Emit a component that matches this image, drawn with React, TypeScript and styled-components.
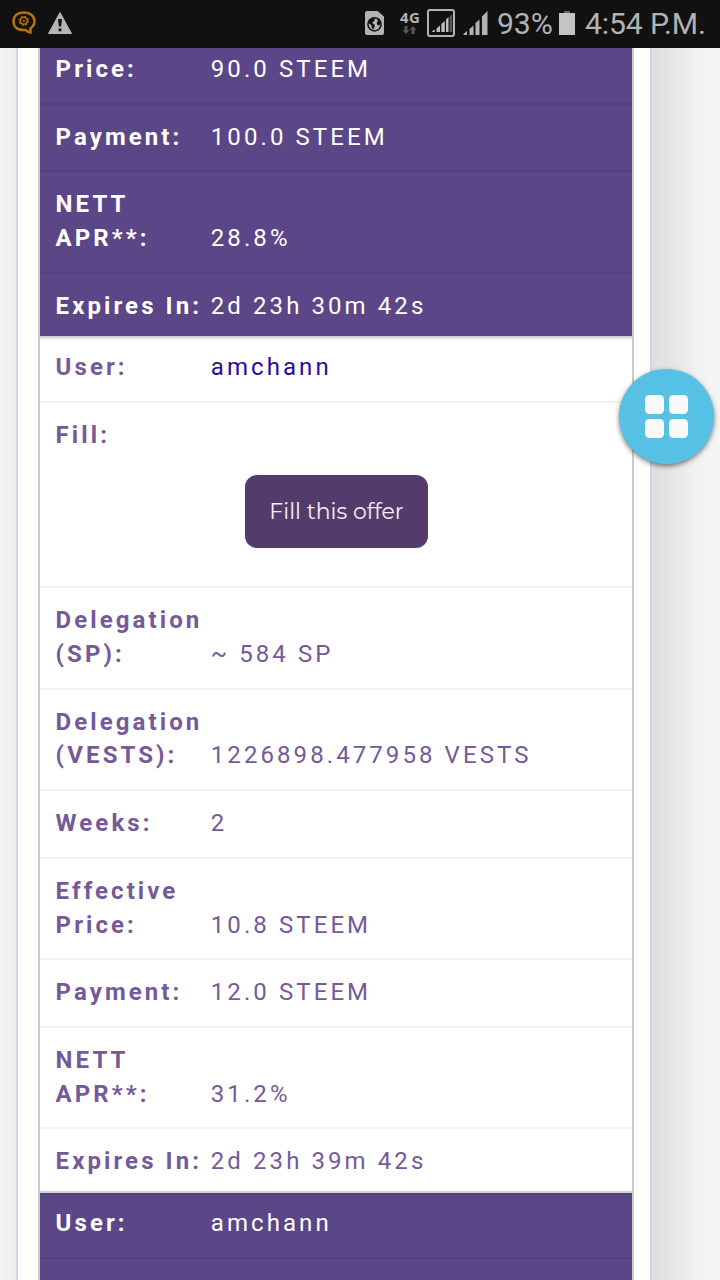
import React from "react";
import styled, { createGlobalStyle, css } from "styled-components";

const GlobalStyle = createGlobalStyle`
  * { box-sizing: border-box; }
  body { margin: 0; font-family: Roboto, sans-serif; background: #f3f3f3; }
`;

const Phone = styled.div`
  position: relative;
  width: 720px;
  height: 1280px;
  display: flex;
  flex-direction: column;
  overflow: hidden;
`;

const StatusBar = styled.header`
  height: 48px;
  flex: none;
  display: flex;
  justify-content: space-between;
  background: #111;
  color: #b3b3b3;
  svg { display: block; flex: none; }
`;

const StatusGroup = styled.div`
  display: flex;
`;

const StatusText = styled.span<{ $width: number }>`
  width: ${(p) => p.$width}px;
  font-size: 30.2px;
  letter-spacing: -0.15px;
  line-height: 47px;
  white-space: nowrap;
`;

const NetworkType = styled.div`
  width: 27px;
  padding-top: 9px;
  font: 700 15px/17px "Open Sans", sans-serif;
  letter-spacing: 0.3px;
`;

const Viewport = styled.main`
  flex: 1;
  min-height: 0;
  display: flex;
  overflow: hidden;
`;

const LeftShade = styled.div`
  width: 16px;
  background: linear-gradient(90deg, #f4f4f4, #ededed);
`;

const RightShade = styled.div`
  flex: 1;
  background: linear-gradient(90deg, #dedede 0, #e3e3e3 20%, #f1f1f1 65%, #f6f6f6 100%);
`;

const Sheet = styled.section`
  width: 636px;
  padding: 0 16px 0 20px;
  border: solid #dacfec;
  border-width: 0 2px;
  background: #fff;
`;

const OfferList = styled.div`
  margin-top: -13px;
  border: solid #cbcbcb;
  border-width: 0 2px;
`;

const Offer = styled.article<{ $dark?: boolean }>`
  --line: ${(p) => (p.$dark ? "#564180" : "#f1f1f1")};
  --label: ${(p) => (p.$dark ? "#fff" : "#745a9b")};
  --value: ${(p) => (p.$dark ? "#fff" : "#745a9b")};
  --link: ${(p) => (p.$dark ? "#fff" : "#2c0a9c")};
  background: ${(p) => (p.$dark ? "#5b4687" : "#fff")};
  & + & { border-top: 2px solid #d2d2d2; }
`;

const Row = styled.div<{ $first?: boolean; $last?: boolean }>`
  display: flex;
  align-items: flex-end;
  padding: 16.1px 16px 15.9px 15.6px;
  border-top: 2px solid var(--line);
  font-size: 24px;
  line-height: 33.7px;
  letter-spacing: 3.08px;
  ${(p) => p.$first && css`padding-top: 11.9px;`}
  ${(p) => p.$last && css`padding-bottom: 12px;`}
`;

const FillRow = styled(Row)`
  height: 185.25px;
  flex-direction: column;
  align-items: stretch;
`;

const Label = styled.span`
  width: 155.2px;
  flex: none;
  color: var(--label);
  font-weight: 700;
  white-space: pre-line;
`;

const Value = styled.span`
  color: var(--value);
  white-space: nowrap;
`;

const UserLink = styled.a`
  color: var(--link);
`;

const ClippedRow = styled(Row)`
  height: 67.75px;
`;

const FillButton = styled.button`
  width: 183px;
  height: 73px;
  margin: 22.2px 0 0 189.4px;
  padding: 0;
  border: 0;
  border-radius: 12px;
  background: #533c6c;
  color: #f3eff6;
  font: 400 22px/73px Montserrat, Lato, sans-serif;
`;

const FloatingButton = styled.div`
  position: absolute;
  left: 619px;
  top: 369px;
  width: 95px;
  height: 95px;
  border-radius: 50%;
  background: #57c0e5;
  box-shadow: 0 2px 5px rgba(0, 0, 0, 0.5);
  display: grid;
  grid-template-columns: 19px 19px;
  grid-auto-rows: 19px;
  gap: 5px;
  place-content: center;
`;

const Tile = styled.i`
  border-radius: 4.5px;
  background: #fafafa;
`;

type Entry = [label: string, value: string];

const OfferRow = ({ entry, last }: { entry: Entry; last?: boolean }) => (
  <Row $last={last}>
    <Label>{entry[0]}</Label>
    <Value>{entry[1]}</Value>
  </Row>
);

const UserRow = () => (
  <Row $first>
    <Label>User:</Label>
    <UserLink>amchann</UserLink>
  </Row>
);

const previousOffer: Entry[] = [
  ["Price:", "90.0 STEEM"],
  ["Payment:", "100.0 STEEM"],
  ["NETT\nAPR**:", "28.8%"],
  ["Expires In:", "2d 23h 30m 42s"],
];

const currentOffer: Entry[] = [
  ["Delegation\n(SP):", "~ 584 SP"],
  ["Delegation\n(VESTS):", "1226898.477958 VESTS"],
  ["Weeks:", "2"],
  ["Effective\nPrice:", "10.8 STEEM"],
  ["Payment:", "12.0 STEEM"],
  ["NETT\nAPR**:", "31.2%"],
  ["Expires In:", "2d 23h 39m 42s"],
];

const NotificationIcons = () => (
  <svg width="80" height="48" viewBox="0 0 80 48">
    <g fill="none" stroke="#b87409">
      <path d="M30.5 32.5v-4.2c2.5-1.7 4-4 4-7 0-5.2-4-8.8-10.2-8.8h-1c-6 0-9.8 3.6-9.8 8.8 0 5.4 3.8 8.8 10.4 8.8h1.6c1.3 1.1 2.8 1.9 5 2.4z" strokeWidth="2.5" />
      <circle cx="23.8" cy="20.8" r="3.5" strokeWidth="1.5" />
      <circle cx="23.8" cy="20.8" r="4.6" strokeWidth="1.2" strokeDasharray="1.8 1.81" />
      <circle cx="23.8" cy="20.8" r=".8" strokeWidth="1" />
    </g>
    <path d="M60 12.5 71.5 33.5h-23z" fill="#b5b5b5" stroke="#b5b5b5" strokeWidth="1" strokeLinejoin="round" />
    <path d="M58 19h4l-.9 7.6h-2.2zM58.6 28.5h2.8v2.8h-2.8z" fill="#111" />
  </svg>
);

const SimIcon = () => (
  <svg width="36" height="48" viewBox="0 0 36 48">
    <path d="M3 11h10.500l6.500 5.500V33a2 2 0 0 1-2 2H3a2 2 0 0 1-2-2V13a2 2 0 0 1 2-2z" fill="#b3b3b3" />
    <circle cx="10.500" cy="24.300" r="6.600" fill="#b3b3b3" stroke="#111" strokeWidth="1.500" />
    <path d="M4.500 21.500 8 18.300l2.800.4-.4 2.300-2 1.200.6 1.600 2 1.200-.6 2-1 2.500-1.800-1.500v-2.600l-2.600-1.800zM13 19.200l2.600 1.600 1 3-1.800 2-1.700-1.200-.4-2 1.200-1.200z" fill="#111" />
  </svg>
);

const DataArrows = () => (
  <svg width="20" height="9" viewBox="0 0 20 9">
    <path d="M4.500 0h3v4h2L6 8 2.500 4h2zM11.500 8h3V4h2L13 0 9.500 4h2z" fill="#555" />
  </svg>
);

const Signals = () => (
  <svg width="70" height="48" viewBox="0 0 70 48">
    <rect x="1" y="10" width="26" height="26" rx="2" fill="none" stroke="#b3b3b3" strokeWidth="2" />
    <path d="M5.300 32v-1l2.500-1.500V32zM9.500 32v-3.500l3.500-3V32zM14.300 32v-8l3.500-3V32zM19 32V19.500l2.500-2.500v15z" fill="#bdbdbd" />
    <path d="M22.500 32V16.500l2.800-2.500v18z" fill="#555" />
    <path d="M36.500 35v-1l3.500-3v4zM42.500 35v-6l4-3.500V35zM48.500 35V23l4-3.500V35zM55 35V16.500l5.500-5.500v24z" fill="#b3b3b3" />
  </svg>
);

const Battery = () => (
  <svg width="26" height="48" viewBox="0 0 26 48">
    <path d="M5 11h6v2H5z" fill="#666" />
    <path d="M0 13h16v22H0z" fill="#c4c4c4" />
  </svg>
);

export default function App() {
  return (
    <Phone>
      <GlobalStyle />
      <StatusBar>
        <NotificationIcons />
        <StatusGroup>
          <SimIcon />
          <NetworkType>
            4G
            <DataArrows />
          </NetworkType>
          <Signals />
          <StatusText $width={62}>93%</StatusText>
          <Battery />
          <StatusText $width={135}>4:54 P.M.</StatusText>
        </StatusGroup>
      </StatusBar>
      <Viewport>
        <LeftShade />
        <Sheet>
          <OfferList>
            <Offer $dark>
              {previousOffer.map((entry, i) => (
                <OfferRow key={entry[0]} entry={entry} last={i === previousOffer.length - 1} />
              ))}
            </Offer>
            <Offer>
              <UserRow />
              <FillRow>
                <Label>Fill:</Label>
                <FillButton>Fill this offer</FillButton>
              </FillRow>
              {currentOffer.map((entry, i) => (
                <OfferRow key={entry[0]} entry={entry} last={i === currentOffer.length - 1} />
              ))}
            </Offer>
            <Offer $dark>
              <UserRow />
              <ClippedRow />
            </Offer>
          </OfferList>
        </Sheet>
        <RightShade />
      </Viewport>
      <FloatingButton>
        <Tile />
        <Tile />
        <Tile />
        <Tile />
      </FloatingButton>
    </Phone>
  );
}
